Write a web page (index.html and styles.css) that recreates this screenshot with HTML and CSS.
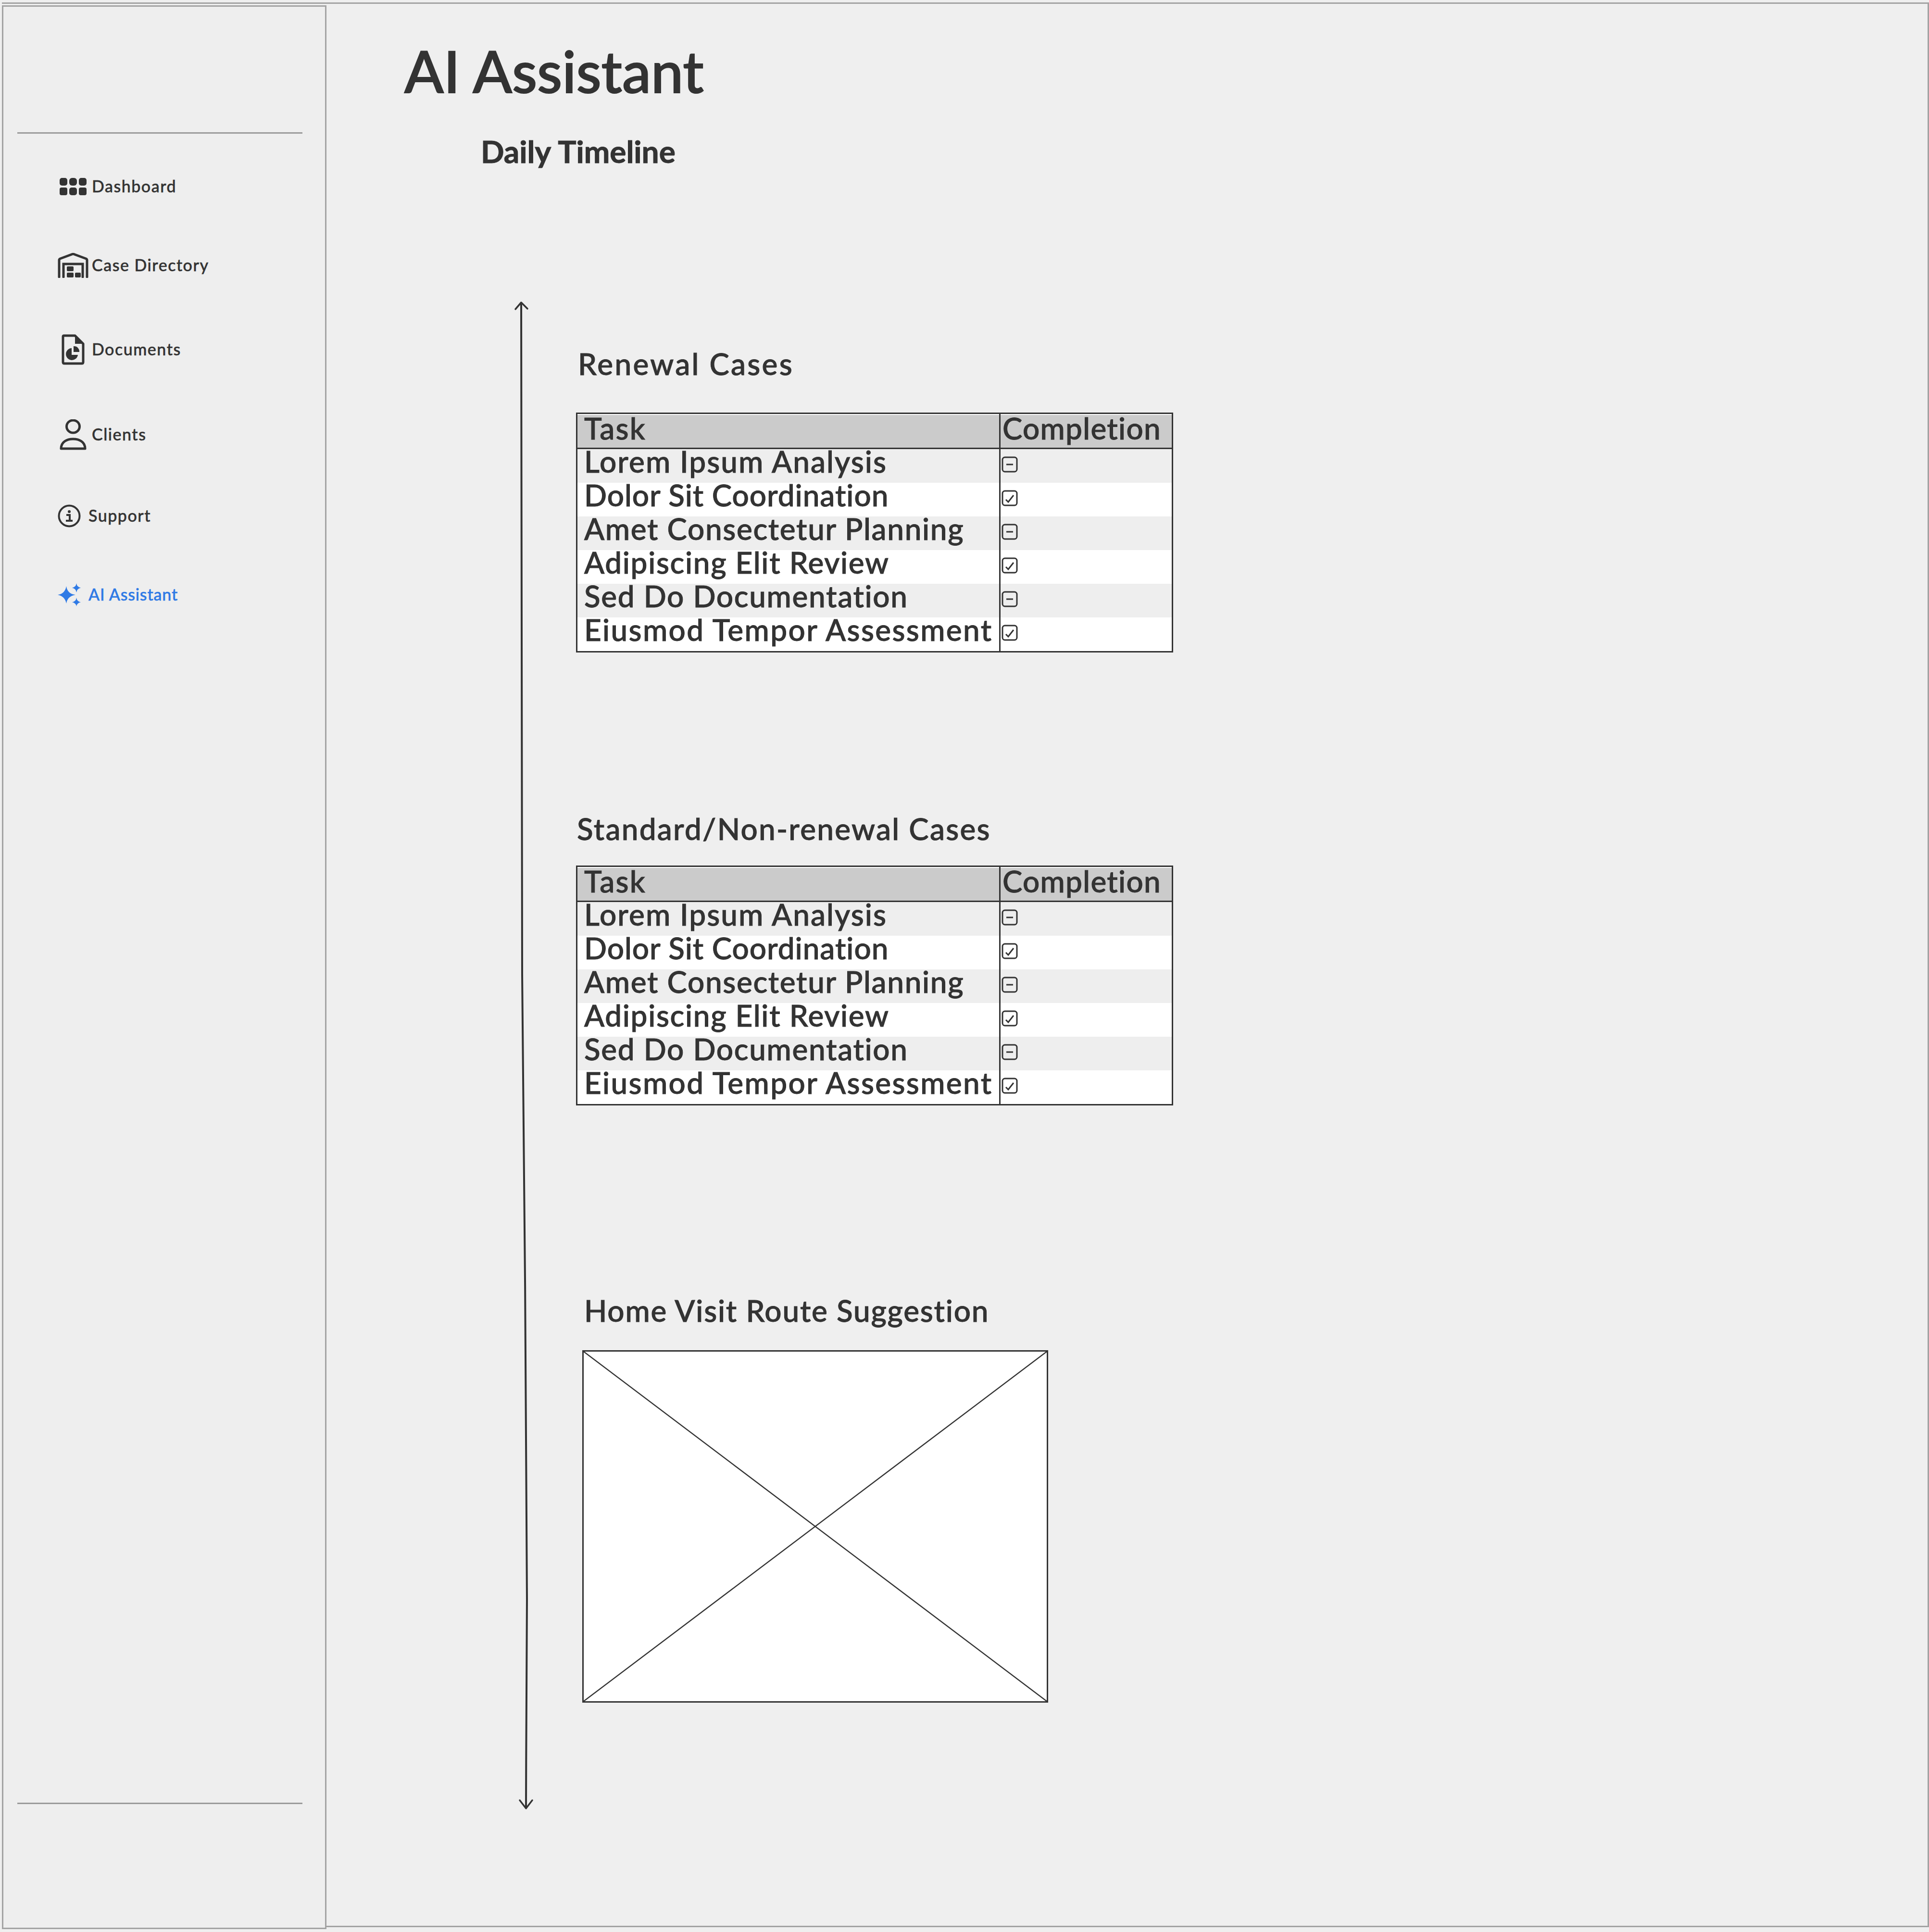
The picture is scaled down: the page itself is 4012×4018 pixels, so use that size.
FILE: index.html
```html
<!DOCTYPE html>
<html lang="en">
<head>
<meta charset="utf-8">
<title>AI Assistant</title>
<link rel="stylesheet" href="styles.css">
</head>
<body>
<div class="app">
  <aside class="sidebar">
    <hr class="rule rule-top">
    <nav class="nav">
      <a class="nav-item">
        <svg class="icon wide" width="56" height="36" viewBox="0 0 56 36"><g fill="#333"><rect x="0" y="0" width="16" height="16" rx="5"/><rect x="20" y="0" width="16" height="16" rx="6"/><rect x="40" y="0" width="16" height="16" rx="5"/><rect x="0" y="20" width="16" height="16" rx="4"/><rect x="20" y="20" width="16" height="16" rx="5"/><rect x="40" y="20" width="16" height="16" rx="4"/></g></svg>
        <span>Dashboard</span>
      </a>
      <a class="nav-item">
        <svg class="icon wide" width="64" height="52" viewBox="0 0 64 52"><path d="M3 50V15Q3 13 5 12L32 2L59 12Q61 13 61 15V50" fill="none" stroke="#333" stroke-width="5" stroke-linecap="round" stroke-linejoin="round"/><path d="M12 50V23H52V50" fill="none" stroke="#333" stroke-width="5" stroke-linecap="round"/><g fill="#333"><rect x="19" y="28" width="14" height="10" rx="2"/><rect x="19" y="41" width="14" height="10" rx="2"/><rect x="36" y="41" width="12" height="10" rx="2"/></g></svg>
        <span>Case Directory</span>
      </a>
      <a class="nav-item">
        <svg class="icon wide" width="48" height="64" viewBox="0 0 48 64"><path d="M5 3H28L45 20V58Q45 61 42 61H6Q3 61 3 58V5Q3 3 5 3Z" fill="none" stroke="#333" stroke-width="5" stroke-linejoin="round"/><path d="M28 2L46 20H28Z" fill="#333"/><path d="M21 29A12.5 12.5 0 1 0 34 43H21Z" fill="#333"/><path d="M25 25A11 11 0 0 1 37 37H25Z" fill="#333"/></svg>
        <span>Documents</span>
      </a>
      <a class="nav-item">
        <svg class="icon wide" width="56" height="64" viewBox="0 0 56 64"><ellipse cx="28" cy="15" rx="13.500" ry="13" fill="none" stroke="#333" stroke-width="5"/><path d="M3 61C3 47 15 41 28 41C41 41 53 47 53 61Z" fill="none" stroke="#333" stroke-width="5" stroke-linejoin="round"/></svg>
        <span>Clients</span>
      </a>
      <a class="nav-item narrow">
        <svg class="icon" width="48" height="48" viewBox="0 0 48 48"><circle cx="24" cy="24" r="21.500" fill="none" stroke="#333" stroke-width="4"/><circle cx="24" cy="15" r="3" fill="#333"/><path d="M18 22H25V34M17 34H31" fill="none" stroke="#333" stroke-width="4"/></svg>
        <span>Support</span>
      </a>
      <a class="nav-item narrow active">
        <svg class="icon" width="48" height="48" viewBox="0 0 48 48"><g fill="#2f7ae5"><path d="M18 6Q20 22 37 24Q20 27 18 42Q15 27 0 24Q15 22 18 6Z"/><path d="M39 0Q40 8 48 9.500Q40 11 39 19Q38 11 30 9.500Q38 8 39 0Z"/><path d="M39 30Q40 38 48 39.500Q40 41 39 48Q38 41 30 39.500Q38 38 39 30Z"/></g></svg>
        <span>AI Assistant</span>
      </a>
    </nav>
    <hr class="rule rule-bottom">
  </aside>
  <main class="main">
    <h1 class="title">AI Assistant</h1>
    <h2 class="subtitle">Daily Timeline</h2>
    <div class="timeline">
      <svg class="arrow" width="60" height="3140" viewBox="0 0 60 3140"><path d="M25 6C22 400 24 900 27 1400C30 1900 37 2200 37 2700C37 2900 35 3000 35 3132" fill="none" stroke="#333" stroke-width="4"/><path d="M13 17L25 3L38 16" fill="none" stroke="#333" stroke-width="3.500" stroke-linecap="round" stroke-linejoin="round"/><path d="M22 3118L35 3135L48 3118" fill="none" stroke="#333" stroke-width="3.500" stroke-linecap="round" stroke-linejoin="round"/></svg>
      <div class="blocks">
        <h3 class="heading heading-renewal">Renewal Cases</h3>
        <table class="tasks">
          <thead><tr><th class="task">Task</th><th class="done">Completion</th></tr></thead>
          <tbody>
            <tr><td class="task">Lorem Ipsum Analysis</td><td class="done"><svg class="box" width="36" height="36" viewBox="0 0 36 36"><rect x="2" y="2" width="30" height="30" rx="5" fill="none" stroke="#333" stroke-width="3"/><path d="M10 17H24" stroke="#333" stroke-width="3"/></svg></td></tr>
            <tr><td class="task">Dolor Sit Coordination</td><td class="done"><svg class="box" width="36" height="36" viewBox="0 0 36 36"><rect x="2" y="2" width="30" height="30" rx="5" fill="none" stroke="#333" stroke-width="3"/><path d="M9 20L14 25L25 11" fill="none" stroke="#333" stroke-width="3"/></svg></td></tr>
            <tr><td class="task">Amet Consectetur Planning</td><td class="done"><svg class="box" width="36" height="36" viewBox="0 0 36 36"><rect x="2" y="2" width="30" height="30" rx="5" fill="none" stroke="#333" stroke-width="3"/><path d="M10 17H24" stroke="#333" stroke-width="3"/></svg></td></tr>
            <tr><td class="task">Adipiscing Elit Review</td><td class="done"><svg class="box" width="36" height="36" viewBox="0 0 36 36"><rect x="2" y="2" width="30" height="30" rx="5" fill="none" stroke="#333" stroke-width="3"/><path d="M9 20L14 25L25 11" fill="none" stroke="#333" stroke-width="3"/></svg></td></tr>
            <tr><td class="task">Sed Do Documentation</td><td class="done"><svg class="box" width="36" height="36" viewBox="0 0 36 36"><rect x="2" y="2" width="30" height="30" rx="5" fill="none" stroke="#333" stroke-width="3"/><path d="M10 17H24" stroke="#333" stroke-width="3"/></svg></td></tr>
            <tr><td class="task">Eiusmod Tempor Assessment</td><td class="done"><svg class="box" width="36" height="36" viewBox="0 0 36 36"><rect x="2" y="2" width="30" height="30" rx="5" fill="none" stroke="#333" stroke-width="3"/><path d="M9 20L14 25L25 11" fill="none" stroke="#333" stroke-width="3"/></svg></td></tr>
          </tbody>
        </table>
        <h3 class="heading heading-standard">Standard/Non-renewal Cases</h3>
        <table class="tasks">
          <thead><tr><th class="task">Task</th><th class="done">Completion</th></tr></thead>
          <tbody>
            <tr><td class="task">Lorem Ipsum Analysis</td><td class="done"><svg class="box" width="36" height="36" viewBox="0 0 36 36"><rect x="2" y="2" width="30" height="30" rx="5" fill="none" stroke="#333" stroke-width="3"/><path d="M10 17H24" stroke="#333" stroke-width="3"/></svg></td></tr>
            <tr><td class="task">Dolor Sit Coordination</td><td class="done"><svg class="box" width="36" height="36" viewBox="0 0 36 36"><rect x="2" y="2" width="30" height="30" rx="5" fill="none" stroke="#333" stroke-width="3"/><path d="M9 20L14 25L25 11" fill="none" stroke="#333" stroke-width="3"/></svg></td></tr>
            <tr><td class="task">Amet Consectetur Planning</td><td class="done"><svg class="box" width="36" height="36" viewBox="0 0 36 36"><rect x="2" y="2" width="30" height="30" rx="5" fill="none" stroke="#333" stroke-width="3"/><path d="M10 17H24" stroke="#333" stroke-width="3"/></svg></td></tr>
            <tr><td class="task">Adipiscing Elit Review</td><td class="done"><svg class="box" width="36" height="36" viewBox="0 0 36 36"><rect x="2" y="2" width="30" height="30" rx="5" fill="none" stroke="#333" stroke-width="3"/><path d="M9 20L14 25L25 11" fill="none" stroke="#333" stroke-width="3"/></svg></td></tr>
            <tr><td class="task">Sed Do Documentation</td><td class="done"><svg class="box" width="36" height="36" viewBox="0 0 36 36"><rect x="2" y="2" width="30" height="30" rx="5" fill="none" stroke="#333" stroke-width="3"/><path d="M10 17H24" stroke="#333" stroke-width="3"/></svg></td></tr>
            <tr><td class="task">Eiusmod Tempor Assessment</td><td class="done"><svg class="box" width="36" height="36" viewBox="0 0 36 36"><rect x="2" y="2" width="30" height="30" rx="5" fill="none" stroke="#333" stroke-width="3"/><path d="M9 20L14 25L25 11" fill="none" stroke="#333" stroke-width="3"/></svg></td></tr>
          </tbody>
        </table>
        <h3 class="heading heading-route">Home Visit Route Suggestion</h3>
        <div class="map">
          <svg class="map-cross" viewBox="0 0 967 729" preserveAspectRatio="none"><path d="M0 0L967 729M967 0L0 729" stroke="#333" stroke-width="2.500" fill="none"/></svg>
        </div>
      </div>
    </div>
  </main>
</div>
</body>
</html>
```

FILE: styles.css
```css
* { box-sizing: border-box; }
html, body { margin: 0; padding: 0; height: 4018px; overflow: hidden; background: #efefef; }
body { font-family: "Lato", "Noto Sans", sans-serif; color: #333; }

.app {
  display: flex;
  width: 4008px;
  height: 4006px;
  margin: 5px 0 0 4px;
  border-top: 3px solid #a3a3a3;
}

.sidebar {
  flex: none;
  display: flex;
  flex-direction: column;
  width: 675px;
  height: 4001px;
  margin-top: 3px;
  border: 3px solid #a3a3a3;
  background: #eee;
}

.rule { width: 593px; height: 3px; margin: 0 0 0 29px; border: 0; background: #9a9a9a; }
.rule-top { margin-top: 261px; }
.rule-bottom { margin-top: auto; margin-bottom: 257px; }

.nav {
  display: grid;
  grid-template-rows: 164px 175px 177px 169px 164px 70px;
  padding: 75px 0 0 113px;
}
.nav-item { display: flex; align-items: center; gap: 7px; height: 70px; font-size: 34px; font-weight: 500; letter-spacing: 1.500px; -webkit-text-stroke: 0.500px #333; }
.nav-item span { margin-bottom: 4px; }
.nav-item.narrow { gap: 16px; }
.nav-item.active { color: #2f7ae5; -webkit-text-stroke-color: #2f7ae5; letter-spacing: 0.800px; }
.icon { flex: none; }
.icon.wide { width: 64px; }

.main {
  flex: 1;
  height: 4000px;
  padding-left: 162px;
  border-right: 3px solid #a3a3a3;
  border-bottom: 3px solid #a3a3a3;
}

.title { margin: 64px 0 0; font-size: 120px; line-height: 150px; font-weight: 500; -webkit-text-stroke: 2px #333; }
.subtitle { margin: 53px 0 0 159px; font-size: 64px; line-height: 80px; font-weight: 700; word-spacing: 2px; -webkit-text-stroke: 1px #333; }

.timeline { display: flex; margin: 271px 0 0 218px; }
.arrow { flex: none; }
.blocks { margin-left: 79px; padding-top: 90px; }

.heading { margin: 0 0 0 2px; font-size: 62px; line-height: 80px; font-weight: 500; -webkit-text-stroke: 1px #333; }
.heading-renewal { margin-left: 4px; letter-spacing: 3.300px; }
.heading-standard { margin-top: 326px; letter-spacing: 2.300px; }
.heading-route { margin-top: 386px; margin-left: 17px; letter-spacing: 1.800px; }

.tasks { border-collapse: collapse; table-layout: fixed; width: 1239px; font-size: 62px; border: 3px solid #333; letter-spacing: 1.700px; -webkit-text-stroke: 1px #333; }
.heading-renewal + .tasks { margin-top: 62px; }
.heading-standard + .tasks { margin-top: 37px; }
.tasks th, .tasks td { padding: 0 0 20px; height: 70px; line-height: 50px; text-align: left; font-weight: 500; white-space: nowrap; }
.tasks th { height: 73px; padding-bottom: 12px; line-height: 58px; background: #cbcbcb; border-bottom: 3px solid #333; box-shadow: inset 0 2px 0 #fff; letter-spacing: 2.400px; }
.tasks .task { width: 880px; padding-left: 14px; border-right: 3px solid #333; }
.tasks .done { width: 359px; padding-left: 4px; padding-bottom: 0; }
.tasks th.done { letter-spacing: 1.300px; padding-bottom: 12px; }
.tasks tbody tr:nth-child(1) .task { letter-spacing: 2.100px; }
.tasks tbody tr:nth-child(2) .task { letter-spacing: 1px; }
.tasks tbody tr:nth-child(6) .task { letter-spacing: 2.400px; }
.tasks tbody tr:nth-child(odd) { background: #eee; }
.tasks tbody tr:nth-child(even) { background: #fff; }
.box { display: block; margin: 0 0 4px -2px; }

.map { width: 969px; height: 733px; margin: 43px 0 0 13px; background: #fff; border: 3px solid #333; }
.map-cross { display: block; width: 100%; height: 100%; }
```
